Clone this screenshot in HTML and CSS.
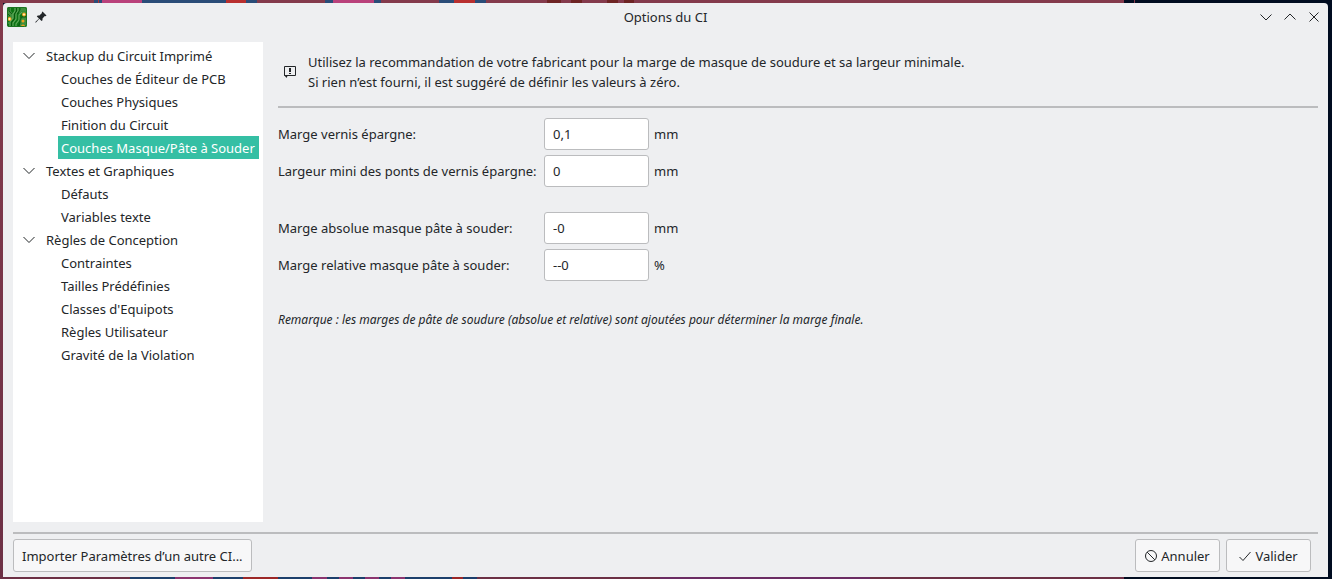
FILE: index.html
```html
<!DOCTYPE html>
<html lang="fr">
<head>
<meta charset="utf-8">
<title>Options du CI</title>
<link rel="stylesheet" href="styles.css">
</head>
<body class="desktop">
<div class="window">
  <header class="titlebar">
    <div class="title-side">
      <svg class="app-icon" viewBox="0 0 20 20" aria-hidden="true">
        <defs><clipPath id="board"><rect width="20" height="20" rx="2"/></clipPath></defs>
        <g clip-path="url(#board)">
          <rect width="20" height="20" fill="#0d7414"/>
          <path d="M13 0h7v4h-5l-3 3zM13 12l2-2h5v10h-7zM0 0h4v4l2 3v4l-2 1-4-3z" fill="#3d8f3c"/>
          <g fill="none" stroke="#5fa85a" stroke-width="1.200">
            <path d="M8 0v4l-2 3v4l-3 4v5M11 0v4L9 7v5l-3 4v4M20 5h-5l-3 3v5l-3 4v3M0 16h2"/>
          </g>
          <g fill="none" stroke="#07500c" stroke-width="0.800">
            <path d="M9.500 0v4l-2 3v4.500l-3 4V20M0 6l3 3M2 0v4l3 3M20 10h-5l-2 3v3l-2 4M13 0v3l-3 4"/>
          </g>
          <g fill="#f0a020"><circle cx="17" cy="7.500" r="2"/><circle cx="2.500" cy="12" r="2"/><circle cx="16" cy="14" r="1.500"/><circle cx="16" cy="19.500" r="2"/></g>
          <g fill="#fff3b8"><circle cx="17" cy="7.500" r="1"/><circle cx="2.500" cy="12" r="1"/></g>
          <rect x="0.500" y="0.500" width="19" height="19" rx="2" fill="none" stroke="#1b7320"/>
        </g>
      </svg>
      <button class="icon-button" type="button" aria-label="Épingler">
        <svg class="pin" viewBox="0 0 12 12" aria-hidden="true"><path d="M7.500 0.500 11.500 4.500 10.500 5.200 9.800 5 7.500 7.500 7.500 9.200 6.500 10 4.300 7.800 1 11.500 0.300 11.500 0.300 11 4 7.500 1.800 5.400 2.700 4.400 4.400 4.400 7 2 6.800 1.300Z" fill="#232629"/></svg>
      </button>
    </div>
    <h1 class="title">Options du CI</h1>
    <div class="title-side title-controls">
      <button class="icon-button" type="button" aria-label="Réduire"><svg class="glyph" viewBox="0 0 12 12" aria-hidden="true"><path d="M0.500 3.500 6 9 11.500 3.500"/></svg></button>
      <button class="icon-button" type="button" aria-label="Agrandir"><svg class="glyph" viewBox="0 0 12 12" aria-hidden="true"><path d="M0.500 8.500 6 3 11.500 8.500"/></svg></button>
      <button class="icon-button" type="button" aria-label="Fermer"><svg class="glyph" viewBox="0 0 12 12" aria-hidden="true"><path d="M1.500 1.500 10.500 10.500M10.500 1.500 1.500 10.500"/></svg></button>
    </div>
  </header>

  <div class="body">
    <nav class="tree" aria-label="Catégories">
      <ul class="tree-list">
        <li>
          <button class="group" type="button" aria-expanded="true"><svg class="glyph" viewBox="0 0 12 12" aria-hidden="true"><path d="M0.500 3 6 8.500 11.500 3"/></svg>Stackup du Circuit Imprimé</button>
          <ul class="tree-list children">
            <li><button class="item" type="button">Couches de Éditeur de PCB</button></li>
            <li><button class="item" type="button">Couches Physiques</button></li>
            <li><button class="item" type="button">Finition du Circuit</button></li>
            <li><button class="item selected" type="button" aria-current="page">Couches Masque/Pâte à Souder</button></li>
          </ul>
        </li>
        <li>
          <button class="group" type="button" aria-expanded="true"><svg class="glyph" viewBox="0 0 12 12" aria-hidden="true"><path d="M0.500 3 6 8.500 11.500 3"/></svg>Textes et Graphiques</button>
          <ul class="tree-list children">
            <li><button class="item" type="button">Défauts</button></li>
            <li><button class="item" type="button">Variables texte</button></li>
          </ul>
        </li>
        <li>
          <button class="group" type="button" aria-expanded="true"><svg class="glyph" viewBox="0 0 12 12" aria-hidden="true"><path d="M0.500 3 6 8.500 11.500 3"/></svg>Règles de Conception</button>
          <ul class="tree-list children">
            <li><button class="item" type="button">Contraintes</button></li>
            <li><button class="item" type="button">Tailles Prédéfinies</button></li>
            <li><button class="item" type="button">Classes d'Equipots</button></li>
            <li><button class="item" type="button">Règles Utilisateur</button></li>
            <li><button class="item" type="button">Gravité de la Violation</button></li>
          </ul>
        </li>
      </ul>
    </nav>

    <main class="panel">
      <div class="notice">
        <svg class="notice-icon" viewBox="0 0 12 12" aria-hidden="true"><path d="M0.500 0.500h11v9h-11z" fill="none" stroke="#232629"/><path d="M0 9h4L2.500 12z" fill="#232629"/><path d="M5 2h2v4H5zM5 7h2v1H5z" fill="#232629"/></svg>
        <p class="notice-text">Utilisez la recommandation de votre fabricant pour la marge de masque de soudure et sa largeur minimale.<br>Si rien n’est fourni, il est suggéré de définir les valeurs à zéro.</p>
      </div>
      <form class="form">
        <div class="fields">
          <label for="mask-margin">Marge vernis épargne:</label><input class="field" id="mask-margin" type="text" value="0,1"><span>mm</span>
          <label for="mask-web">Largeur mini des ponts de vernis épargne:</label><input class="field" id="mask-web" type="text" value="0"><span>mm</span>
        </div>
        <div class="fields">
          <label for="paste-abs">Marge absolue masque pâte à souder:</label><input class="field" id="paste-abs" type="text" value="-0"><span>mm</span>
          <label for="paste-rel">Marge relative masque pâte à souder:</label><input class="field" id="paste-rel" type="text" value="--0"><span>%</span>
        </div>
      </form>
      <p class="remark">Remarque : les marges de pâte de soudure (absolue et relative) sont ajoutées pour déterminer la marge finale.</p>
    </main>
  </div>

  <footer class="footer">
    <button class="button import" type="button">Importer Paramètres d’un autre CI...</button>
    <div class="actions">
      <button class="button action" type="button"><svg class="glyph" viewBox="0 0 12 12" aria-hidden="true"><circle cx="6" cy="6" r="5.500"/><path d="M2.100 2.100 9.900 9.900"/></svg>Annuler</button>
      <button class="button action" type="button"><svg class="glyph" viewBox="0 0 12 12" aria-hidden="true"><path d="M0.500 7 4 10.500 11.500 2"/></svg>Valider</button>
    </div>
  </footer>
</div>
</body>
</html>
```
FILE: styles.css
```css
* {
  box-sizing: border-box;
}

.desktop {
  display: flex;
  min-height: 100vh;
  margin: 0;
  padding: 3px 4px 2px 3px;
  font: 13px/20px "Noto Sans", sans-serif;
  color: #232629;
  background-color: #000c20;
  background-image:
    linear-gradient(90deg,
      #843a4c 94px, #2a4c78 94px 98px, #b82f2f 98px 99px, #2a4c78 99px 102px,
      #b9417b 102px 142px, #2a4c78 142px 226px, #b82f2f 226px 246px, #2a4c78 246px 257px,
      #843a4c 257px 325px, #2a4c78 325px 333px, #b9417b 333px 374px, #2a4c78 374px 381px,
      #843a4c 381px 439px, #2a4c78 439px 454px, #b82f2f 454px 475px, #2a4c78 475px 486px,
      #843a4c 486px 547px, #6e2424 547px 561px, #843a4c 561px 571px, #6e2424 571px 582px,
      #843a4c 582px 607px, #6e2424 607px 618px, #843a4c 618px 624px, #6e2424 624px 634px,
      #843a4c 634px 1124px, #000c20 1124px 1134px, #843a4c 1134px 1135px, #000c20 1135px),
    linear-gradient(90deg,
      #6c3045 130px, #1c3f6c 130px 175px, #8b3570 175px 213px, #1c3f6c 213px 243px,
      #9c2727 243px 278px, #1c3f6c 278px 312px, #8b3570 312px 327px, #1c3f6c 327px 339px,
      #8b3570 339px 353px, #1c3f6c 353px 365px, #8b3570 365px 379px, #1c3f6c 379px 391px,
      #8b3570 391px 405px, #1c3f6c 405px 452px, #9c2727 452px 463px, #1c3f6c 463px 477px,
      #6c3045 477px 660px, #6b2c63 660px 870px, #6c3045 870px 1124px, #000c20 1124px),
    linear-gradient(#843a4c, #6c3045);
  background-size: 100% 3px, 100% 2px, 3px 100%;
  background-position: top left, bottom left, top left;
  background-repeat: no-repeat;
}

.window {
  display: flex;
  flex: 1;
  flex-direction: column;
  min-width: 0;
  padding: 0 10px 5px;
  background: #eeeff1;
  border-radius: 4px 4px 0 0;
}

button,
input {
  font: inherit;
  color: inherit;
}

.titlebar {
  display: grid;
  grid-template-columns: 1fr auto 1fr;
  align-items: center;
  height: 28px;
  margin: 0 -6px;
}

.title {
  margin: 0;
  font: inherit;
}

.title-side {
  display: flex;
  align-items: center;
  gap: 8px;
}

.title-controls {
  justify-content: flex-end;
  gap: 12px;
  padding-right: 4px;
}

.app-icon {
  width: 20px;
  height: 20px;
}

.icon-button {
  display: flex;
  padding: 0;
  border: 0;
  background: none;
}

.pin,
.glyph,
.notice-icon {
  flex: none;
  width: 12px;
  height: 12px;
}

.glyph {
  fill: none;
  stroke: #232629;
}

.body {
  display: flex;
  flex: 1;
  gap: 15px;
  padding: 11px 0 10px;
}

.tree {
  flex: none;
  width: 250px;
  padding: 2px 4px 2px 10px;
  background: #fff;
}

.tree-list {
  margin: 0;
  padding: 0;
  list-style: none;
}

.children {
  padding-left: 35px;
}

.group,
.item {
  display: flex;
  align-items: center;
  height: 23px;
  padding: 0;
  border: 0;
  background: none;
  white-space: nowrap;
}

.group {
  gap: 11px;
}

.item {
  padding: 0 3px;
}

.selected {
  width: 100%;
  color: #fff;
  background: #35bfa4;
}

.panel {
  flex: 1;
  min-width: 0;
}

.notice {
  display: flex;
  align-items: center;
  gap: 12px;
  padding: 10px 6px 14px;
  border-bottom: 2px solid #bbbcbe;
}

.notice-text,
.remark {
  margin: 0;
}

.form {
  display: flex;
  flex-direction: column;
  gap: 25px;
  padding-top: 10px;
}

.fields {
  display: grid;
  grid-template-columns: 261px 105px auto;
  align-items: center;
  gap: 5px;
}

.field {
  width: 100%;
  height: 32px;
  padding: 0 8px;
  border: 1px solid #bbbcbe;
  border-radius: 3px;
  background: #fff;
}

.remark {
  padding-top: 29px;
  font-size: 12px;
  font-style: italic;
}

.footer {
  display: flex;
  justify-content: space-between;
  padding: 5px 7px 0 0;
  border-top: 2px solid #bbbcbe;
}

.actions {
  display: flex;
  gap: 6px;
}

.button {
  display: flex;
  align-items: center;
  justify-content: center;
  gap: 4px;
  height: 33px;
  padding: 0 6px;
  border: 1px solid #bbbcbe;
  border-radius: 3px;
  background: #f7f7f8;
  white-space: nowrap;
}

.import {
  padding: 0 8px;
}

.action {
  min-width: 85px;
}
```
